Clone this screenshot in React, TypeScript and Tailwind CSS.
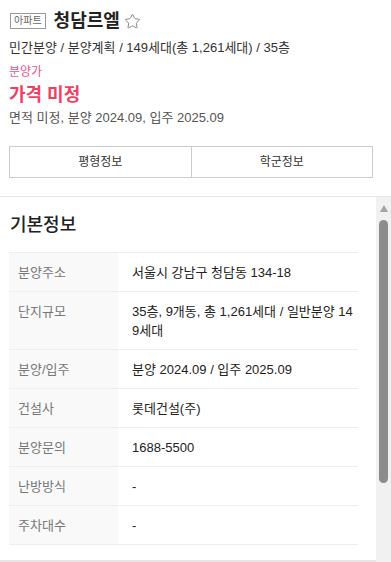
import { Star } from "lucide-react";

const rows: { label: string; value: string }[] = [
  { label: "분양주소", value: "서울시 강남구 청담동 134-18" },
  { label: "단지규모", value: "35층, 9개동, 총 1,261세대 / 일반분양 149세대" },
  { label: "분양/입주", value: "분양 2024.09 / 입주 2025.09" },
  { label: "건설사", value: "롯데건설(주)" },
  { label: "분양문의", value: "1688-5500" },
  { label: "난방방식", value: "-" },
  { label: "주차대수", value: "-" },
];

export default function App() {
  return (
    <div
      className="w-[391px] h-[562px] overflow-hidden bg-white text-[#222] flex flex-col"
      style={{ fontFamily: '"Liberation Sans", "Noto Sans CJK KR", sans-serif' }}
    >
      <header className="px-[9px] pt-[11px] pb-[18px] border-b border-[#e6e6e6]">
        <div className="flex items-center h-[20px]">
          <span className="border border-[#999] text-[#666] text-[10px] leading-[14px] px-[3px] ml-px">아파트</span>
          <h1 className="ml-[8px] text-[18px] font-bold leading-[20px] text-[#222]">청담르엘</h1>
          <Star size={17} strokeWidth={1.4} className="ml-[4px] text-[#888]" />
        </div>
        <p className="mt-[8px] text-[13px] leading-[18px] text-[#333]">
          민간분양 / 분양계획 / 149세대(총 1,261세대) / 35층
        </p>
        <p className="mt-[6px] text-[12px] leading-[18px] text-[#f0508a]">분양가</p>
        <p className="mt-[3px] text-[18px] font-bold leading-[22px] text-[#f0405f]">가격 미정</p>
        <p className="mt-[3px] text-[13px] leading-[18px] text-[#555]">
          면적 미정, 분양 2024.09, 입주 2025.09
        </p>
        <div className="mt-[19px] flex border border-[#ccc] w-[364px]">
          <button className="flex-1 h-[30px] text-[12px] text-[#333] border-r border-[#ccc]">평형정보</button>
          <button className="flex-1 h-[30px] text-[12px] text-[#333]">학군정보</button>
        </div>
      </header>

      <div className="flex flex-1 min-h-0">
        <div className="flex-1 min-w-0">
          <section className="px-[9px] pt-[16px] pb-[15px]">
            <h2 className="pl-px text-[18px] leading-[24px] font-medium text-[#222]">기본정보</h2>
            <table className="mt-[15px] w-[349px] border-t border-[#eee] border-collapse text-[13px]">
              <tbody>
                {rows.map((r) => (
                  <tr key={r.label} className="border-b border-[#eee]">
                    <td className="w-[109px] bg-[#f9f9f9] pl-[9px] py-[9.5px] leading-[19px] text-[#777] align-top">
                      {r.label}
                    </td>
                    <td className="pl-[14px] pr-[2px] py-[9.5px] leading-[19px] text-[#222] align-top break-all">
                      {r.value}
                    </td>
                  </tr>
                ))}
              </tbody>
            </table>
          </section>
          <div className="h-[8px] bg-[#e6e6e6]" />
        </div>
        <div className="w-[15px] bg-[#f1f1f1] flex flex-col items-center pt-[8px]">
          <div className="w-0 h-0 border-l-[4.5px] border-r-[4.5px] border-b-[7px] border-l-transparent border-r-transparent border-b-[#a3a3a3]" />
          <div className="mt-[8px] w-[9px] h-[263px] rounded-full bg-[#8c8c8c]" />
        </div>
      </div>
    </div>
  );
}
